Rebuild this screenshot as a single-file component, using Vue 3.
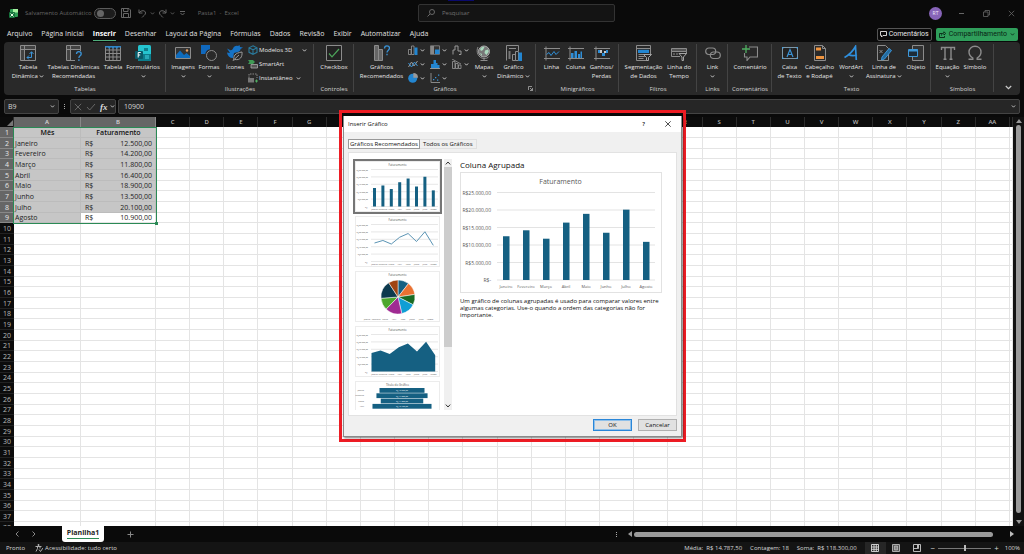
<script setup>
import { ref, h } from 'vue'

const Chevron = () =>
  h('svg', { viewBox: '0 0 6 4', width: 5, height: 3, class: 'chev' }, [
    h('path', { d: 'M.8.6 3 2.9 5.2.6', fill: 'none', stroke: 'currentColor', 'stroke-width': 1.1 }),
  ])

const menu = ['Arquivo', 'Página Inicial', 'Inserir', 'Desenhar', 'Layout da Página', 'Fórmulas', 'Dados', 'Revisão', 'Exibir', 'Automatizar', 'Ajuda']
const activeMenu = ref('Inserir')

const g = 'fill="none" stroke="#8c8c8c"'
const b = 'fill="none" stroke="#3a93d6"'
const icons = {
  pivot: `<path ${g} d="M.5.5h15v15H.5zM.5 4.5h15M4.5.5v15"/><path fill="#555" d="M1 1h3v3H1zM5 1h10v3H5zM1 5h3v10H1z" opacity=".6"/><path ${b} d="M7 12.5h4.500V7M9.500 9l2-2.300 2 2.300M9 10.500l-2 2 2 2"/>`,
  pivotq: `<path ${g} d="M9 15.500H.5V.5h14V6M.5 4.500h14M4.500.5v15"/><path fill="#555" d="M1 1h3v3H1zM5 1h9v3H5zM1 5h3v10H1z" opacity=".6"/><path ${b} stroke-width="1.300" d="M10.500 9c0-1.500 1-2.300 2.300-2.300s2.400.8 2.400 2.200c0 1.800-2.300 1.900-2.300 4M12.900 14.300V16"/>`,
  table: `<path ${g} d="M.5 1.500h15v14H.5zM.5 5h15M.5 8.500h15M.5 12h15M4.300 1.500v14M8 1.500v14M11.800 1.500v14"/><path fill="#2f86c8" d="M0 1h16v1.500H0zM3 2.500h2.500L4.300 4zM6.800 2.500h2.500L8 4zM10.500 2.500H13L11.800 4z"/>`,
  forms: `<rect x="3" y="0" width="13" height="16" rx="1.500" fill="#25c4cf"/><path fill="#0c7d8c" d="M3 9h13v5.500a1.500 1.500 0 0 1-1.500 1.500h-10A1.500 1.500 0 0 1 3 14.500z"/><path fill="#27a9b8" d="M10 10h4v4h-4z"/><path fill="#0e7f8c" d="M9 3h4v3H9z"/><rect x="0" y="6" width="8" height="8" rx="1" fill="#0a5a68"/><path fill="none" stroke="#fff" d="M3.200 12.500v-5h2.500M3.200 10h2"/>`,
  image: `<path fill="#333" stroke="#8c8c8c" d="M.5 2.500h15v11H.5z"/><path fill="#0f6cbd" d="m1 10 4-4.500 4 4.500 2.500-2 3.500 3v2H1z"/><circle cx="12" cy="5.500" r="1.200" fill="#e8a060"/>`,
  shapes: `<path fill="#1068bd" d="M0 0h9v4.200A6 6 0 0 0 4.200 9H0z"/><circle cx="10.500" cy="10.500" r="5" ${g}/>`,
  icons: `<path fill="#1672c4" d="M0 3.500 3 5c1.200.5 2.300 0 3-1.500C7 1 9 .2 11 1l1.500-1 .5 2 3 .5-2.500 1.500c0 1.500-1 2.500-2.500 3L7 8l-1 5C2.500 13 .5 11 0 7.500L3 8z"/><path fill="#292929" stroke="#9a9a9a" d="M7 15.500c-1-4.500 1-7.500 8-8.500.5 5-2 8.500-7 7.500M5.500 16 12 10"/>`,
  check: `<path fill="#222" stroke="#8c8c8c" d="M.5.5h15v15H.5z"/><path fill="none" stroke="#4da45a" stroke-width="1.200" d="m3 8.500 3 3.300L13 4"/>`,
  chartq: `<path fill="#666" stroke="#8c8c8c" d="M.5.5h4v15h-4zM4.500 4.500h4v11h-4z"/><path ${b} stroke-width="1.300" d="M10.500 3.500C10.500 1.700 11.600.8 13 .8s2.500.8 2.500 2.300c0 2-2.500 2.200-2.500 4.500M13 8.800v1.500"/>`,
  globe: `<circle cx="8" cy="6.500" r="5.500" fill="#777" stroke="#aaa"/><path fill="#a9d8bd" d="M4 4c1.500-2 3-2.500 4.500-2L7 5 5 6zM9 5.500l3-1 .8 2L10.500 10 8.500 8zM4 8l2 1-.5 2z"/><path ${g} d="M2 2C-.5 6.500 2.500 13.500 8 13.500c2 0 4-.5 5-2M8 13.500V15M4.500 15.500h7"/>`,
  pivotchart: `<path ${g} d="M.5 15.500V.5h12V6M3 3.500h7"/><path fill="#777" d="M2.500 6h2v8h-2z"/><path ${g} d="M6.500 9.500h3v6h-3zM9.500 6.500h3v9h-3z"/><path fill="#2386d1" d="M12.500 7.500H16V16h-3.500z"/>`,
  spline: `<path ${g} d="M2 1.500v14M0 3.500h16M0 13.500h16"/><path fill="none" stroke="#2f8fd8" d="m2.500 9.500 2.500-2 2 3 3-4 2 3 3-3"/>`,
  spcol: `<path ${g} d="M2 1.500v14M0 3.500h16M0 13.500h16"/><path fill="#2f8fd8" d="M3 8h2.500v5H3zM6.500 6H9v7H6.500zM10 9h2v4h-2zM12.500 6.500H14V13h-1.500z"/>`,
  spwin: `<path ${g} d="M2 1.500v14M0 3.500h16M0 13.500h16"/><path fill="#2f8fd8" d="M4 5h2v3H4zM8 8h3v3H8zM12 5h2v3h-2z"/><path fill="#ccc" d="M6 5h2v3H6zM10 6h2v2h-2z"/>`,
  slicer: `<path ${g} d="M11 15.500H.5V.5h14V9M.5 3.500h14"/><path fill="#2386d1" d="M2 4.800h11V8H2z"/><path ${g} d="M2.500 9.500h6v2h-6M2.500 13.500h5"/><path fill="#292929" stroke="#a5a5a5" d="M7.500 9.500h8l-3 3v3h-2v-3z"/>`,
  timeline: `<path fill="#555" stroke="#8c8c8c" d="M.5 3.500h15v3H.5z"/><path ${g} d="M9 11.500H.5v-5h15V9M3 8v2M6 8v2"/><path fill="#292929" stroke="#a5a5a5" d="M8 8.500h7.500l-3 3.500v3.500h-1.500V12z"/>`,
  link: `<rect x=".7" y="3" width="10" height="6.500" rx="3.200" ${g} stroke-width="1.200"/><rect x="5.300" y="7" width="10" height="6.500" rx="3.200" ${g} stroke-width="1.200"/>`,
  comment: `<path ${g} stroke-width="1.100" d="M7 2h8.500v10H8l-3 3.500V12H2.500V8"/><path fill="none" stroke="#4fae61" stroke-width="1.300" d="M4 0v8M0 4h8"/>`,
  textbox: `<path fill="#222" stroke="#7d97a8" d="M.5 2.500h15v11H.5z"/><path fill="#4aa0dc" d="M0 2h1.500v1.500H0zM14.500 2H16v1.500h-1.500zM0 12.500h1.500V14H0zM14.500 12.500H16V14h-1.500z"/><path ${b} stroke-width="1.200" d="m5 12 3-7.500L11 12M6 9.500h4"/>`,
  header: `<path ${g} d="M2.500.5h8l3 3v12h-11zM10.500.5v3h3"/><path fill="#ee9440" d="M4 2.500h5v3H4zM4 11h8v3H4z"/>`,
  wordart: `<path fill="none" stroke="#2f8fdd" stroke-width="1.700" d="M1.500 12.500C6 10 10 6 12.500 1.500l.8 13.500M5.500 9.500c2 1.200 5 1.500 8.500.5"/>`,
  sign: `<path ${g} d="M1.500.5h8l3 3v12h-11zM3.500 5l3 3M6.500 5l-3 3"/><path fill="#236a9e" stroke="#3a93d6" d="m6 12 7-8.500 2.500 2L8.500 14l-3 1z"/>`,
  object: `<path fill="#333" stroke="#8c8c8c" d="M4.500.5h11v15h-11z"/><path fill="#1d2c38" stroke="#3d97d8" d="M.5 4.500h9v7h-9z"/><path fill="#3d97d8" d="M1 4h8.500v2.500H1z"/>`,
  pi: `<path ${g} stroke-width="1.400" d="M1.500 5V2.500h13V5M5 2.500V14M11 2.500V14M3.500 14.200h3M9.500 14.200h3"/>`,
  omega: `<path ${g} stroke-width="1.400" d="M1.500 14.300h4.300V13C3.300 11.500 2 9.500 2 7c0-3.300 2.500-5.700 6-5.700S14 3.700 14 7c0 2.500-1.300 4.500-3.800 6v1.300h4.300"/>`,
}
const small = {
  cube: `<path fill="none" stroke="#2a7a9c" stroke-width="1.100" d="m5 .8 4 2v4.500l-4 2-4-2V2.800zM1 2.800l4 2 4-2M5 4.800v4.500"/>`,
  smart: `<path fill="#3f9a55" d="M0 1h5l2 2-2 2H0l1.500-2z"/><path fill="#555" stroke="#aaa" stroke-width=".8" d="M3 5.500h6.500V9H3z"/>`,
  shot: `<path fill="none" stroke="#888" stroke-dasharray="1.500 1" d="M1 5V1h8v4"/><path fill="#777" d="M0 5h6v4.500H0z"/><path stroke="#4fae61" d="M7 8h3M8.500 6.500v3"/>`,
  col: `<path fill="#222" stroke="#999" stroke-width=".8" d="M.5 4.500h2.500v5H.5zM3.500 1h2.500v8.500H3.500z"/><path fill="#2386d1" d="M6.500 2.500H9.500V10h-3z"/>`,
  tree: `<path fill="#333" stroke="#8c8c8c" stroke-width=".8" d="M.5.8h9v8.500h-9z"/><path fill="#888" d="M1 1h3v8H1z"/><path fill="#2386d1" d="M5 4.500h4.500V9H5z"/>`,
  fall: `<path fill="none" stroke="#999" d="M1 9.500V5h2V1h3v5h3v3.500H7"/>`,
  line: `<path fill="none" stroke="#999" d="m.5 8 3-5 2.500 4 3.500-5"/><path fill="none" stroke="#3a93d6" d="m.5 4 3 4L6.500 3l3 4"/>`,
  hist: `<path fill="#2386d1" d="M1 5h2.500V1H6v3h1.500v2H9.500v3.500H1z"/><path stroke="#aaa" d="M0 9.700h10"/>`,
  combo: `<path fill="none" stroke="#999" stroke-width=".8" d="M.5 2.500H3v7H.5zM3.500 4.500h2.500v5H3.500zM6.500 6H9v3.500H6.500zM0 0l9 5"/>`,
  pie: `<circle cx="4.700" cy="5.300" r="4.500" fill="#2386d1"/><path fill="#999" d="M5.300 0A4.500 4.500 0 0 1 10 4.700H5.300z"/>`,
  scatter: `<path fill="none" stroke="#888" d="M1 0v9.500h9"/><path fill="#3a93d6" d="M3 6h1.300v1.300H3zM5 4h1.300v1.300H5zM7 6.500h1.300v1.300H7zM8 1.500h1.300v1.300H8z"/>`,
}

const groups = [
  { id: 'tabelas', label: 'Tabelas', tools: [
    { icon: 'pivot', lines: ['Tabela', 'Dinâmica'], arrow: true },
    { icon: 'pivotq', lines: ['Tabelas Dinâmicas', 'Recomendadas'] },
    { icon: 'table', lines: ['Tabela'] },
    { icon: 'forms', lines: ['Formulários'], arrow: true }] },
  { id: 'ilustracoes', label: 'Ilustrações', tools: [
    { icon: 'image', lines: ['Imagens'], arrow: true },
    { icon: 'shapes', lines: ['Formas'], arrow: true },
    { icon: 'icons', lines: ['Ícones'] },
    { list: [['cube', 'Modelos 3D', true], ['smart', 'SmartArt', false], ['shot', 'Instantâneo', true]] }] },
  { id: 'controles', label: 'Controles', tools: [{ icon: 'check', lines: ['Checkbox'] }] },
  { id: 'graficos', label: 'Gráficos', launcher: true, tools: [
    { icon: 'chartq', lines: ['Gráficos', 'Recomendados'] },
    { minis: ['col', 'tree', 'fall', 'line', 'hist', 'combo', 'pie', 'scatter'] },
    { icon: 'globe', lines: ['Mapas'], arrow: true },
    { icon: 'pivotchart', lines: ['Gráfico', 'Dinâmico'], arrow: true }] },
  { id: 'mini', label: 'Minigráficos', tools: [
    { icon: 'spline', lines: ['Linha'] }, { icon: 'spcol', lines: ['Coluna'] }, { icon: 'spwin', lines: ['Ganhos/', 'Perdas'] }] },
  { id: 'filtros', label: 'Filtros', tools: [
    { icon: 'slicer', lines: ['Segmentação', 'de Dados'] }, { icon: 'timeline', lines: ['Linha do', 'Tempo'] }] },
  { id: 'links', label: 'Links', tools: [{ icon: 'link', lines: ['Link'], arrow: true }] },
  { id: 'coment', label: 'Comentários', tools: [{ icon: 'comment', lines: ['Comentário'] }] },
  { id: 'texto', label: 'Texto', tools: [
    { icon: 'textbox', lines: ['Caixa', 'de Texto'] }, { icon: 'header', lines: ['Cabeçalho', 'e Rodapé'] },
    { icon: 'wordart', lines: ['WordArt'], arrow: true }, { icon: 'sign', lines: ['Linha de', 'Assinatura'], arrow: true },
    { icon: 'object', lines: ['Objeto'] }] },
  { id: 'simbolos', label: 'Símbolos', tools: [
    { icon: 'pi', lines: ['Equação'], arrow: true }, { icon: 'omega', lines: ['Símbolo'] }] },
]

const data = [
  ['Janeiro', 12500], ['Fevereiro', 14200], ['Março', 11800], ['Abril', 16400],
  ['Maio', 18900], ['Junho', 13500], ['Julho', 20100], ['Agosto', 10900],
]
const money = (n) => String(n).replace(/(\d)(?=(\d{3})+$)/g, '$1.') + ',00'
const letters = 'ABCDEFGHIJKLMNOPQRSTUVWXYZ'.split('').concat('AA', '')
const rows = Array.from({ length: 38 }, (_, i) => i + 1)

const ticks = [25000, 20000, 15000, 10000, 5000, 0]
const tickLabel = (t) => (t ? 'R$' + money(t) : 'R$-')
const bigX = (i) => 46 + i * 20
const bigY = (v) => 108 - v * 0.0035
const thumbX = (i) => 19.500 + i * 8.400
const thumbY = (v) => 45.500 - v * 0.00148
const linePoints = data.map((d, i) => `${thumbX(i)},${thumbY(d[1])}`).join(' ')
const areaPoints = `16.5,45.5 ${data.map((d, i) => `${16.500 + i * 9.100},${thumbY(d[1])}`).join(' ')} 80.200,45.5`
const pieColors = ['#156082', '#e97132', '#196b24', '#0f9ed5', '#a02b93', '#4ea72e', '#0d3a4e', '#a04412']
const total = data.reduce((s, d) => s + d[1], 0)
let acc = 0
const slices = data.map((d, i) => {
  const p = (f) => `${43 + 17 * Math.sin(f * 2 * Math.PI)},${26 - 17 * Math.cos(f * 2 * Math.PI)}`
  const a = acc / total
  acc += d[1]
  return { d: `M43,26L${p(a)}A17,17 0 0 1 ${p(acc / total)}Z`, fill: pieColors[i] }
})
const thumbs = ['bar', 'line', 'pie', 'area', 'funnel']
const chosen = ref('bar')
const zoom = ref(50)
</script>

<template>
  <div class="app">
    <header class="title">
      <i class="mark"></i>
      <div class="quick">
        <svg width="9" height="9" viewBox="0 0 9 9"><rect x="1" width="8" height="8" rx="1" fill="#2f9e55" /><path fill="#a5f0a0" d="M4 0h5v3.500H4z" /><rect y="3" width="6" height="6" rx="1" fill="#16733c" /><path d="m1.500 4.500 3 3M4.500 4.500l-3 3" stroke="#e8ffe8" /></svg>
        <label for="autosave" class="autos">Salvamento Automático</label>
        <input id="autosave" type="checkbox" class="toggle" />
        <button aria-label="Salvar"><svg width="10" height="10" viewBox="0 0 10 10"><path d="M.5.500h7.500l1.500 1.500v7.500h-9zM2.500.500v3h4.500v-3M2.500 9.500v-4h5v4" fill="none" stroke="currentColor" /></svg></button>
        <button aria-label="Desfazer" class="undo"><svg width="9" height="9" viewBox="0 0 9 9"><path d="M1 .5v3.500h3.500M1.200 3.800C3 1 7.500 1 7.500 4c0 2-2 2.500-3.500 4.500" fill="none" stroke="currentColor" /></svg><Chevron /></button>
        <button aria-label="Refazer" class="redo"><svg width="9" height="9" viewBox="0 0 9 9"><path d="M8 .5v3.500H4.500M7.800 3.800C6 1 1.500 1 1.500 4c0 2 2 2.500 3.500 4.500" fill="none" stroke="currentColor" /></svg><Chevron /></button>
        <button aria-label="Personalizar" class="custom"><svg width="5" height="5" viewBox="0 0 5 5"><path d="M0 .5h5M.5 2l2 2 2-2" fill="none" stroke="currentColor" /></svg></button>
        <span class="doc">Pasta1&nbsp; -&nbsp; Excel</span>
      </div>
      <label class="search">
        <svg width="8" height="8" viewBox="0 0 8 8"><circle cx="5" cy="3" r="2.500" fill="none" stroke="#686868" /><path d="M3 5 .5 7.500" stroke="#686868" /></svg>
        <input type="text" placeholder="Pesquisar" aria-label="Pesquisar" />
      </label>
      <div class="win">
        <span class="avatar">RT</span>
        <button aria-label="Minimizar"><svg width="7" height="7" viewBox="0 0 7 7"><path d="M1 3.500h5" stroke="currentColor" /></svg></button>
        <button aria-label="Restaurar"><svg width="7" height="7" viewBox="0 0 7 7"><path d="M.5 2h4.500v4.500H.5zM2 2V.5h4.500V5H5" fill="none" stroke="currentColor" stroke-width=".8" /></svg></button>
        <button aria-label="Fechar"><svg width="7" height="7" viewBox="0 0 7 7"><path d="m.8.8 5.400 5.400M6.200.8.8 6.200" stroke="currentColor" stroke-width=".8" /></svg></button>
      </div>
    </header>

    <nav class="menu">
      <button v-for="m in menu" :key="m" :class="{ on: m === activeMenu }" @click="activeMenu = m">{{ m }}</button>
      <div class="share">
        <button class="com"><svg width="7" height="7" viewBox="0 0 7 7"><path d="M.5.500h6v4H3L1.500 6V4.500h-1z" fill="none" stroke="currentColor" stroke-width=".9" /></svg>Comentários</button>
        <button class="comp"><svg width="7" height="7" viewBox="0 0 7 7"><path d="M3 2.500H.5v4h5V5M2.500 4.500C2.500 3 3.500 2 5 2V.8l1.700 1.700L5 4V3" fill="none" stroke="currentColor" stroke-width=".9" /></svg>Compartilhamento <Chevron /></button>
      </div>
    </nav>

    <section class="ribbon">
      <div v-for="gr in groups" :key="gr.id" class="group" :class="gr.id">
        <div class="tools">
          <template v-for="(t, i) in gr.tools" :key="i">
            <button v-if="t.lines" class="tool">
              <svg width="16" height="16" viewBox="0 0 16 16" v-html="icons[t.icon]"></svg>
              <span v-for="(l, k) in t.lines" :key="l">{{ l }}<template v-if="t.arrow && k === 1">&nbsp;<Chevron /></template></span>
              <span v-if="t.arrow && t.lines.length === 1"><Chevron /></span>
            </button>
            <div v-else-if="t.list" class="list">
              <button v-for="s in t.list" :key="s[0]" :class="s[0]"><svg width="10" height="10" viewBox="0 0 10 10" v-html="small[s[0]]"></svg>{{ s[1] }}<Chevron v-if="s[2]" /></button>
            </div>
            <div v-else class="minis">
              <button v-for="s in t.minis" :key="s" :aria-label="s"><svg width="10" height="10" viewBox="0 0 10 10" v-html="small[s]"></svg><Chevron /></button>
            </div>
          </template>
        </div>
        <div class="glabel">{{ gr.label }}</div>
        <svg v-if="gr.launcher" class="launch" width="5" height="5" viewBox="0 0 5 5"><path d="M.5 4V.5H4M2 2l2.500 2.500M4.500 2v2.500H2" fill="none" stroke="#aaa" stroke-width=".8" /></svg>
      </div>
      <button class="collapse" aria-label="Recolher"><svg width="7" height="5" viewBox="0 0 7 5"><path d="m.8 1 2.700 2.700L6.200 1" fill="none" stroke="#ccc" stroke-width="1.200" /></svg></button>
    </section>

    <section class="fbar">
      <div class="box name"><input type="text" value="B9" aria-label="Caixa de nome" /><Chevron /></div>
      <span class="dots"><i></i><i></i><i></i></span>
      <div class="box fx">
        <svg width="8" height="8" viewBox="0 0 8 8"><path d="m.8.8 6.400 6.400M7.200.8.8 7.200" stroke="#666" /></svg>
        <svg width="10" height="8" viewBox="0 0 10 8"><path d="m1 4 2.700 3L9 1" fill="none" stroke="#666" /></svg>
        <em>fx</em><Chevron />
      </div>
      <div class="box formula"><input type="text" value="10900" aria-label="Barra de fórmulas" /><Chevron /></div>
    </section>

    <main class="sheet">
      <div class="cells">
        <table>
          <colgroup><col class="c0" /><col class="ca" /><col class="cb" /><col v-for="n in 25" :key="n" /><col class="cz" /></colgroup>
          <thead>
            <tr><th class="corner"><svg width="6" height="6" viewBox="0 0 6 6"><path d="M6 0v6H0z" fill="#777" /></svg></th>
              <th v-for="(l, i) in letters" :key="i" :class="{ sel: i < 2 }">{{ l }}</th></tr>
          </thead>
          <tbody>
            <tr v-for="r in rows" :key="r" :class="{ picked: r < 10 }">
              <th>{{ r }}</th>
              <td v-for="(l, i) in letters" :key="i" :class="{ gray: r < 10 && i < 2 && !(r === 9 && i === 1), head: r === 1 }">
                <template v-if="r === 1 && i < 2">{{ i ? 'Faturamento' : 'Mês' }}</template>
                <template v-else-if="r < 10 && i === 0">{{ data[r - 2][0] }}</template>
                <div v-else-if="r < 10 && i === 1" class="money"><span>R$</span><span>{{ money(data[r - 2][1]) }}</span></div>
              </td>
            </tr>
          </tbody>
        </table>
        <div class="range"></div>
      </div>
      <div class="vbar"><i class="up"></i><i class="vthumb"></i><i class="down"></i></div>
    </main>

    <section class="tabs">
      <button aria-label="Anterior"><svg width="4" height="6" viewBox="0 0 4 6"><path d="M3.500.5 1 3l2.500 2.500" fill="none" stroke="currentColor" /></svg></button>
      <button aria-label="Próxima"><svg width="4" height="6" viewBox="0 0 4 6"><path d="M.5.5 3 3 .5 5.500" fill="none" stroke="currentColor" /></svg></button>
      <button class="plan"><span>Planilha1</span></button>
      <button class="add" aria-label="Nova planilha"><svg width="7" height="7" viewBox="0 0 7 7"><path d="M3.500.5v6M.5 3.500h6" stroke="currentColor" /></svg></button>
      <div class="hbar"><span class="dots"><i></i><i></i><i></i></span><i class="left"></i><i class="hthumb"></i><i class="right"></i></div>
    </section>

    <footer class="status">
      <span class="ready">Pronto</span>
      <svg width="8" height="8" viewBox="0 0 8 8"><circle cx="3.500" cy="1" r=".9" fill="#bbb" /><path d="M.5 2.500h6M2.500 2.500v2L1 7.500M5 2.500v2M4 5.500l1.500 2L8 4" fill="none" stroke="#bbb" stroke-width=".9" /></svg>
      <span>Acessibilidade: tudo certo</span>
      <div class="sums"><span>Média:&nbsp; R$ 14.787,50</span><span>Contagem: 18</span><span>Soma:&nbsp; R$ 118.300,00</span></div>
      <button class="view on" aria-label="Normal"><svg width="8" height="8" viewBox="0 0 8 8"><path d="M.5.5h7v7h-7zM.5 3h7M.5 5.300h7M3 .5v7M5.300.5v7" fill="none" stroke="#ddd" stroke-width=".9" /></svg></button>
      <button class="view" aria-label="Layout"><svg width="8" height="8" viewBox="0 0 8 8"><path d="M.5.5h7v7h-7z" fill="#555" stroke="#aaa" /><path d="M2.500 2h3v4h-3z" fill="#888" stroke="#ccc" stroke-width=".6" /></svg></button>
      <button class="view" aria-label="Quebras"><svg width="8" height="8" viewBox="0 0 8 8"><path d="M.5.5h7v7h-7zM.5 4.500h4v-4M4.500 4.500h1v-4" fill="none" stroke="#ccc" stroke-width=".9" /></svg></button>
      <div class="zoom"><button aria-label="Menos">−</button><input v-model="zoom" type="range" aria-label="Zoom" /><button aria-label="Mais">+</button><span>100%</span></div>
    </footer>

    <div class="highlight">
      <section class="dialog" role="dialog" aria-label="Inserir Gráfico">
        <div class="dtitle"><span>Inserir Gráfico</span><button aria-label="Ajuda" class="help">?</button><button aria-label="Fechar"><svg width="6" height="6" viewBox="0 0 6 6"><path d="m.3.3 5.400 5.400M5.700.3.3 5.700" stroke="#222" stroke-width=".8" /></svg></button></div>
        <div class="dtabs"><button class="on">Gráficos Recomendados</button><button>Todos os Gráficos</button></div>
        <div class="panel">
          <div class="thumbs">
            <button v-for="t in thumbs" :key="t" :class="{ on: chosen === t }" :aria-label="t" @click="chosen = t">
              <svg viewBox="0 0 85 51" width="85" height="51" font-size="3" fill="#555">
                <rect x=".5" y=".5" width="84" height="50" fill="#fff" stroke="#ececec" />
                <text x="42.500" y="4.800" text-anchor="middle">{{ t === 'funnel' ? 'Título do Gráfico' : 'Faturamento' }}</text>
                <template v-if="t === 'bar' || t === 'line' || t === 'area'">
                  <g v-for="k in ticks" :key="k">
                    <path :d="`M16 ${thumbY(k)}h67`" stroke="#dcdcdc" stroke-width=".7" />
                    <text x="13" :y="thumbY(k) + 1" text-anchor="end" font-size="2">{{ tickLabel(k) }}</text>
                  </g>
                  <text v-for="(d, i) in data" :key="d[0]" :x="thumbX(i)" y="49.200" text-anchor="middle" font-size="2">{{ d[0] }}</text>
                </template>
                <template v-if="t === 'bar'">
                  <rect v-for="(d, i) in data" :key="d[0]" :x="thumbX(i) - 1.500" :y="thumbY(d[1])" width="3" :height="d[1] * 0.00148" fill="#156082" />
                </template>
                <polyline v-if="t === 'line'" :points="linePoints" fill="none" stroke="#5b94b4" />
                <polygon v-if="t === 'area'" :points="areaPoints" fill="#156082" />
                <template v-if="t === 'pie'">
                  <path v-for="s in slices" :key="s.fill" :d="s.d" :fill="s.fill" stroke="#fff" stroke-width=".5" />
                  <text v-for="(d, i) in data" :key="d[0]" :x="12 + i * 9" y="49" text-anchor="middle" font-size="2">{{ d[0] }}</text>
                </template>
                <template v-if="t === 'funnel'">
                  <g v-for="(d, i) in data.slice(0, 4)" :key="d[0]" font-size="2">
                    <rect :x="47 - d[1] * 0.0018" :y="7 + i * 5.300" :width="d[1] * 0.0036" height="4.800" fill="#156082" />
                    <text x="9" :y="10 + i * 5.300" text-anchor="end">{{ d[0] }}</text>
                    <text x="47" :y="10.200 + i * 5.300" text-anchor="middle" fill="#fff">R$ {{ money(d[1]) }}</text>
                  </g>
                </template>
              </svg>
            </button>
          </div>
          <div class="tbar"><svg width="6" height="4" viewBox="0 0 6 4"><path d="M.8 3.400 3 1l2.200 2.400" fill="none" stroke="#333" /></svg><i></i><svg width="6" height="4" viewBox="0 0 6 4"><path d="M.8.600 3 3 5.200.6" fill="none" stroke="#333" /></svg></div>
          <div class="preview">
            <h2>Coluna Agrupada</h2>
            <svg viewBox="0 0 202 121" class="big" font-size="5" fill="#595959">
              <rect x=".5" y=".5" width="201" height="120" fill="#fff" stroke="#e2e2e2" />
              <text x="100.500" y="12" text-anchor="middle" font-size="7">Faturamento</text>
              <g v-for="k in ticks" :key="k">
                <path :d="`M37 ${bigY(k)}h158`" stroke="#e3e3e3" />
                <text x="31" :y="bigY(k) + 2" text-anchor="end">{{ tickLabel(k) }}</text>
              </g>
              <g v-for="(d, i) in data" :key="d[0]">
                <rect :x="bigX(i) - 3" :y="bigY(d[1])" width="6.500" :height="d[1] * 0.0035" fill="#156082" />
                <text :x="bigX(i)" y="116" text-anchor="middle" font-size="4">{{ d[0] }}</text>
              </g>
            </svg>
            <p>Um gráfico de colunas agrupadas é usado para comparar valores entre algumas categorias. Use-o quando a ordem das categorias não for importante.</p>
          </div>
        </div>
        <div class="actions"><button class="ok">OK</button><button>Cancelar</button></div>
      </section>
    </div>
  </div>
</template>

<style>
body { margin: 0; background: #0a0a0a; }
.chev { flex: none; }
</style>

<style scoped>
* { box-sizing: border-box; }
.app { position: relative; height: 100vh; display: flex; flex-direction: column; overflow: hidden; background: #0a0a0a; color: #e6e6e6; font: 6px/8px "Open Sans", "Noto Sans", sans-serif; }
button, input { font: inherit; color: inherit; background: none; border: 0; padding: 0; margin: 0; outline: 0; }
button { white-space: nowrap; }
svg { display: block; flex: none; }
h2, p { margin: 0; }

.title { position: relative; flex: none; height: 26px; display: grid; grid-template-columns: 1fr 197px 1fr; align-items: center; padding-left: 9px; color: #666; }
.mark { position: absolute; top: 0; left: 448px; width: 26px; height: 1px; background: #0a0a6e; }
.quick { display: flex; align-items: center; }
.quick button { display: flex; align-items: center; gap: 3px; }
.autos { margin-left: 7px; }
.toggle { appearance: none; width: 22px; height: 11px; border: 1px solid #5c5c5c; border-radius: 6px; margin: 0 5px 0 2px; display: flex; align-items: center; padding-left: 2px; background: #1c1c1c; }
.toggle::before { content: ""; width: 7px; height: 7px; border-radius: 50%; background: #666; }
.toggle:checked { justify-content: flex-end; }
.undo { margin-left: 7px; }
.redo { margin-left: 3px; }
.custom { margin-left: 5px; }
.doc { margin-left: 13px; }
.search { display: flex; align-items: center; gap: 7px; height: 18px; padding: 0 8px; border: 1px solid #333; border-radius: 2px; background: #141414; }
.search input { flex: 1; min-width: 0; }
.search input::placeholder { color: #707070; opacity: 1; }
.win { display: flex; justify-content: flex-end; align-items: center; gap: 18px; padding-right: 9px; }
.avatar { width: 13px; height: 13px; border-radius: 50%; background: #8764b8; color: #f0eaf8; font-size: 5px; line-height: 13px; text-align: center; margin-right: -2px; }

.menu { flex: none; height: 16px; display: flex; align-items: center; gap: 9px; padding: 0 6px 0 7px; font-size: 7px; color: #e0e0e0; }
.menu > button { height: 14px; border-bottom: 1px solid transparent; }
.menu > .on { font-weight: 700; color: #fff; border-color: #4fae7c; }
.share { margin-left: auto; display: flex; gap: 4px; font-family: Roboto, "Open Sans", sans-serif; }
.share button { height: 13px; display: flex; align-items: center; gap: 3px; border-radius: 2px; padding: 0 3px; }
.share .com { border: 1px solid #555; color: #e6e6e6; gap: 2px; padding: 0 2px; }
.share .comp { background: #2f9e5b; color: #0a2415; }

.ribbon { position: relative; flex: none; height: 53px; margin: 0 4px; background: #292929; border-radius: 4px; display: flex; }
.group { position: relative; flex: none; padding: 3px 0 0 4px; display: flex; flex-direction: column; }
.group::after { content: ""; position: absolute; right: 0; top: 2px; bottom: 3px; width: 1px; background: #444; }
.tools { display: grid; height: 41px; }
.glabel { text-align: center; margin-left: -4px; color: #d4d4d4; line-height: 7px; }
.tool { display: flex; flex-direction: column; align-items: center; justify-content: flex-start; line-height: 9px; }
.tool svg + span { margin-top: 2px; }
.tool span { height: 9px; display: flex; align-items: center; justify-content: center; }
.tabelas { width: 162px; } .tabelas .tools { grid-template-columns: 38px 53px 26px 34px; padding-left: 1px; }
.ilustracoes { width: 148px; } .ilustracoes .tools { grid-template-columns: 26px 26px 26px 66px; }
.controles { width: 40px; padding-left: 0; } .controles .glabel, .links .glabel, .coment .glabel { margin-left: 0; }
.graficos { width: 182px; } .graficos .tools { grid-template-columns: 47px 67px 24px 35px; }
.mini { width: 83px; } .mini .tools { grid-template-columns: 23px 25px 27px; }
.filtros { width: 78px; } .filtros .tools { grid-template-columns: 41px 30px; }
.links { width: 31px; padding-left: 0; }
.coment { width: 44px; padding-left: 0; }
.texto { width: 159px; } .texto .tools { grid-template-columns: 27px 33px 30px 36px 28px; }
.simbolos { width: 63px; } .simbolos .tools { grid-template-columns: 25px 30px; }
.list, .minis { display: grid; align-content: start; grid-auto-rows: 14px; margin-top: -2px; }
.list button { display: flex; align-items: center; gap: 1px; }
.list .chev { margin-left: 2px; }
.list .cube .chev { margin-left: 9px; }
.minis { grid-template-columns: repeat(3, 22px); }
.minis button { display: flex; align-items: center; justify-content: center; gap: 2px; }
.launch { position: absolute; right: 3px; bottom: 4px; }
.collapse { margin: auto 8px 5px auto; }

.fbar { flex: none; display: flex; padding: 4px 4px; height: 22px; font-size: 7px; }
.box { height: 15px; border: 1px solid #444; border-radius: 2px; background: #262626; display: flex; align-items: center; color: #d6d6d6; }
.name { width: 55px; padding: 0 3px; }
.name input, .formula input { flex: 1; min-width: 0; }
.dots { display: flex; flex-direction: column; justify-content: center; gap: 1px; margin: 0 5px 0 4px; width: 1px; }
.dots i { width: 1px; height: 1px; background: #aaa; }
.fx { width: 46px; padding: 0 0 0 3px; gap: 4px; }
.fx em { font: italic 700 9px/10px "Liberation Serif", serif; color: #ddd; }
.fx .chev { margin-left: -2px; }
.fbar .name + .dots { margin: 0 5px; }
.formula { flex: 1; margin-left: 2px; padding: 0 3px 0 5px; }

.sheet { flex: 1; min-height: 0; display: flex; }
.cells { position: relative; flex: 1; min-width: 0; overflow: hidden; background: #fff; }
table { width: 100%; table-layout: fixed; border-collapse: separate; border-spacing: 0; font-size: 7px; line-height: 9px; color: #222; }
.c0 { width: 14px; } .ca { width: 67px; } .cb { width: 75px; } .cz { width: 3px; }
th, td { padding: 0; overflow: hidden; white-space: nowrap; }
thead th { height: 10px; background: #0c0c0c; color: #b5b5b5; font-size: 6px; font-weight: 600; border-right: 1px solid #2c2c2c; }
thead .sel { background: #666; color: #d8d8d8; border-color: #888; }
.corner svg { margin: 1px 0 0 auto; }
tbody tr { height: 11px; }
tbody tr:nth-child(3n) { height: 10px; }
tbody th { background: #0c0c0c; color: #b8b8b8; font-weight: 400; border-bottom: 1px solid #222; }
.picked th { background: #666; color: #e6e6e6; border-color: #888; }
td { border-right: 1px solid #e4e4e4; border-bottom: 1px solid #e4e4e4; padding-left: 1px; }
.gray { background: #c6c6c6; border-color: #bcbcbc; }
.head { text-align: center; font-weight: 600; color: #111; }
.money { display: flex; justify-content: space-between; padding: 0 3px; }
.range { position: absolute; left: 13px; top: 10px; width: 144px; height: 97px; border: 1px solid #2a8a55; }
.range::after { content: ""; position: absolute; right: -2px; bottom: -2px; width: 3px; height: 3px; background: #2a8a55; }
.vbar { flex: none; width: 11px; display: flex; flex-direction: column; align-items: center; background: #111; padding: 2px 0; }
.vthumb { flex: 1; width: 5px; margin: 2px 0 7px; border-radius: 3px; background: #9a9a9a; }
.up, .down { border: 3px solid transparent; border-bottom: 4px solid #999; border-top: 0; }
.down { border-top: 4px solid #999; border-bottom: 0; }

.tabs { position: relative; flex: none; height: 16px; display: flex; align-items: center; padding-left: 15px; color: #888; }
.tabs > button + button { margin-left: 13px; }
.tabs .plan { margin-left: 26px; width: 42px; height: 16px; padding-bottom: 2px; background: #fff; color: #222; font-weight: 700; font-size: 7px; border-radius: 0 0 3px 3px; }
.plan span { display: inline-block; border-bottom: 1px solid #2a8a55; line-height: 10px; }
.tabs .add { margin-left: 23px; }
.hbar { margin-left: auto; width: 408px; display: flex; align-items: center; padding-right: 10px; }
.hbar .dots { margin: 0 11px 0 0; }
.hthumb { flex: 1; height: 5px; border-radius: 3px; background: #9a9a9a; margin: 0 17px 0 2px; }
.left, .right { border: 3px solid transparent; border-right: 4px solid #999; border-left: 0; }
.right { border-left: 4px solid #bbb; border-right: 0; }

.status { flex: none; height: 12px; display: flex; align-items: center; background: #141414; color: #d8d8d8; padding: 0 4px 0 6px; }
.ready { margin-right: 10px; }
.status > svg { margin-right: 2px; }
.sums { margin-left: auto; display: flex; gap: 8px; margin-right: 8px; }
.view { width: 21px; height: 12px; display: flex; align-items: center; justify-content: center; }
.view.on { background: #262626; }
.zoom { display: flex; align-items: center; gap: 3px; margin-left: 3px; }
.zoom button { font-size: 8px; }
.zoom span { margin-left: 3px; }
.zoom input { appearance: none; width: 53px; height: 1px; background: #777; }
.zoom input::-webkit-slider-thumb { appearance: none; width: 2px; height: 6px; background: #bbb; }

.highlight { position: absolute; top: 110px; left: calc(50% - 173px); width: 347px; border: 3px solid #ed1c24; padding: 3px 1px 2px; background: linear-gradient(#0a0a0a 14px, transparent 14px); }
.dialog { background: #f0f0f0; color: #111; border: 1px solid #8a8a8a; border-top: 0; box-shadow: 1px 1px 2px #0008; }
.dtitle { height: 16px; background: #fff; display: flex; align-items: center; padding: 0 10px 0 4px; }
.dtitle span { margin-right: auto; }
.dtitle button { margin-left: 20px; }
.help { font-weight: 600; }
.dtabs { display: flex; padding: 7px 4px 0; align-items: flex-start; }
.dtabs button { height: 10px; padding: 0 3px; border: 1px solid #e0e0e0; border-left: 0; line-height: 8px; }
.dtabs .on { background: #fff; border: 1px solid #999; padding: 0 1px; }
.panel { margin: 3px 4px 0; height: 264px; background: #fff; border: 1px solid #e2e2e2; display: flex; padding: 6px 0 5px 4px; }
.thumbs { width: 91px; overflow: hidden; flex: none; }
.thumbs button { display: block; border: 2px solid transparent; }
.thumbs .on { border-color: #757575; }
.tbar { flex: none; width: 8px; background: #f0f0f0; display: flex; flex-direction: column; align-items: center; padding: 2px 0; }
.tbar i { width: 8px; height: 180px; margin: 2px 0 auto; background: #cdcdcd; }
.preview { flex: none; width: 202px; margin-left: 8px; }
.preview h2 { font-size: 8px; font-weight: 400; line-height: 12px; height: 13px; }
.big { width: 100%; }
.preview p { margin-top: 5px; line-height: 7px; }
.actions { display: flex; justify-content: flex-end; gap: 6px; padding: 3px 4px 5px; }
.actions button { width: 39px; height: 12px; background: #e1e1e1; border: 1px solid #b0b0b0; }
.actions .ok { border: 1px solid #2a86d8; box-shadow: inset 0 0 0 1px #8fc0ea; }
</style>
